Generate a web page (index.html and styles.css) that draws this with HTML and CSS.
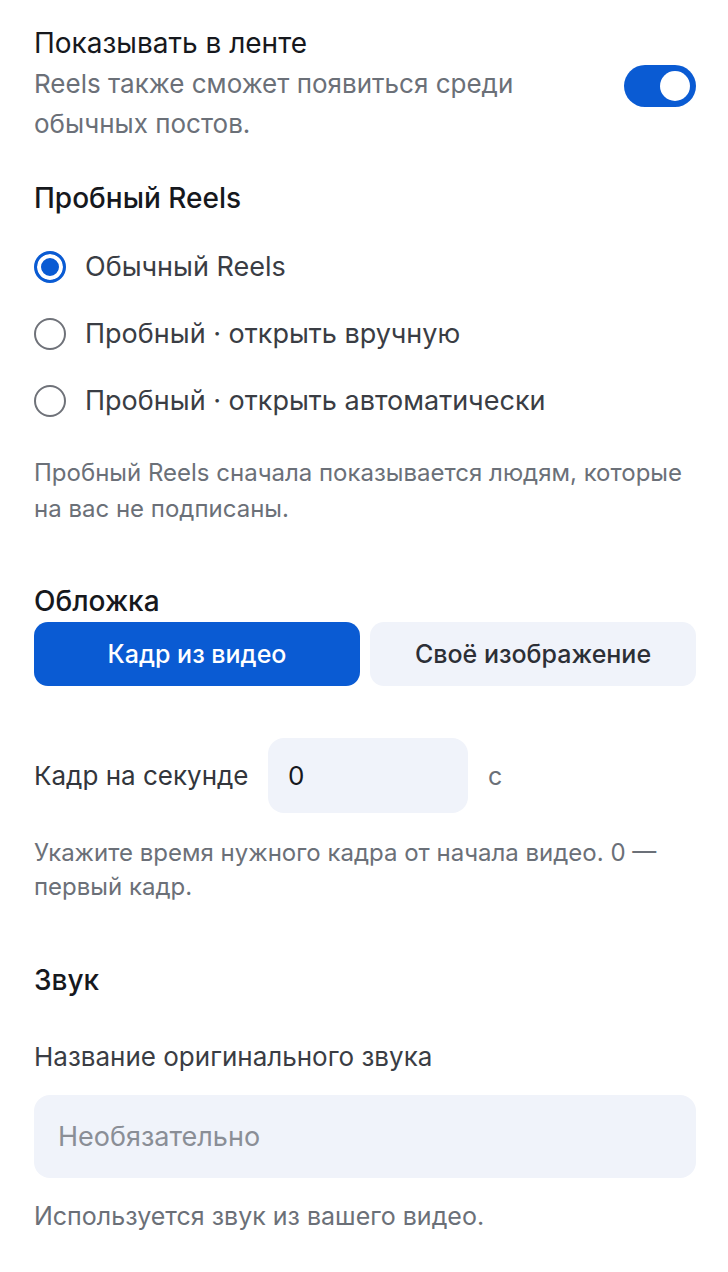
FILE: index.html
```html
<!DOCTYPE html>
<html lang="ru">
<head>
  <meta charset="UTF-8" />
  <meta name="viewport" content="width=device-width, initial-scale=1" />
  <title>Настройки Reels</title>
  <link rel="stylesheet" href="styles.css">
</head>
<body>

  <div class="settings">
    <div class="feed-row">
      <div class="feed-text">
        <div class="title">Показывать в ленте</div>
        <div class="desc">Reels также сможет появиться среди обычных постов.</div>
      </div>
      <div class="toggle on"><span class="knob"></span></div>
    </div>

    <div class="heading trial-heading">Пробный Reels</div>
    <div class="radios">
      <label class="radio checked"><span class="dot"></span>Обычный Reels</label>
      <label class="radio"><span class="dot"></span>Пробный · открыть вручную</label>
      <label class="radio"><span class="dot"></span>Пробный · открыть автоматически</label>
    </div>
    <p class="hint trial-hint">Пробный Reels сначала показывается людям, которые на вас не подписаны.</p>

    <div class="heading cover-heading">Обложка</div>
    <div class="segments">
      <button class="segment active">Кадр из видео</button>
      <button class="segment">Своё изображение</button>
    </div>

    <div class="frame-row">
      <span class="frame-label">Кадр на секунде</span>
      <div class="frame-input">0</div>
      <span class="unit">с</span>
    </div>
    <p class="hint frame-hint">Укажите время нужного кадра от начала видео. 0 — первый кадр.</p>

    <div class="heading sound-heading">Звук</div>
    <div class="field-label">Название оригинального звука</div>
    <div class="text-input">Необязательно</div>
    <p class="hint sound-hint">Используется звук из вашего видео.</p>
  </div>

</body>
</html>
```

FILE: styles.css
```css
body {
  margin: 0;
  background: #ffffff;
  font-family: Inter, "Noto Sans", Arial, sans-serif;
  color: #16181d;
}
.settings {
  padding: 26px 32px 40px 34px;
}
.feed-row {
  display: flex;
  align-items: center;
  justify-content: space-between;
}
.feed-text {
  width: 520px;
}
.title {
  font-size: 28px;
  line-height: 34px;
}
.desc {
  font-size: 26px;
  line-height: 40px;
  color: #6b7078;
  margin-top: 4px;
}
.toggle {
  width: 72px;
  height: 42px;
  border-radius: 21px;
  background: #0a5bd3;
  display: flex;
  align-items: center;
  justify-content: flex-end;
  padding: 0 6px;
  box-sizing: border-box;
  margin-top: 2px;
}
.knob {
  width: 30px;
  height: 30px;
  border-radius: 50%;
  background: #fff;
}
.heading {
  font-size: 28px;
  line-height: 34px;
  font-weight: 500;
}
.trial-heading {
  margin-top: 37px;
}
.radios {
  display: flex;
  flex-direction: column;
  gap: 35px;
  margin-top: 36px;
}
.radio {
  display: flex;
  align-items: center;
  gap: 19px;
  font-size: 27px;
  line-height: 32px;
  color: #3a3d44;
}
.dot {
  width: 32px;
  height: 32px;
  border-radius: 50%;
  border: 2px solid #6f7279;
  box-sizing: border-box;
  flex-shrink: 0;
}
.radio.checked .dot {
  border-color: #0a5bd3;
  background: #0a5bd3;
  box-shadow: inset 0 0 0 4px #fff;
  border-width: 3px;
}
.hint {
  margin: 0;
  font-size: 24px;
  line-height: 36px;
  color: #6b7078;
}
.trial-hint {
  margin-top: 38px;
}
.cover-heading {
  margin-top: 57px;
}
.segments {
  display: grid;
  grid-template-columns: 1fr 1fr;
  gap: 10px;
  margin-top: 4px;
}
.segment {
  height: 64px;
  border: none;
  border-radius: 14px;
  font-family: inherit;
  font-size: 25px;
  font-weight: 500;
  background: #f0f3fa;
  color: #2c2f36;
  cursor: pointer;
}
.segment.active {
  background: #0a5bd3;
  color: #fff;
}
.frame-row {
  display: flex;
  align-items: center;
  margin-top: 52px;
}
.frame-label {
  font-size: 26px;
  color: #33363c;
  width: 234px;
}
.frame-input {
  width: 200px;
  height: 75px;
  box-sizing: border-box;
  border-radius: 16px;
  background: #f0f3fa;
  padding: 0 20px;
  display: flex;
  align-items: center;
  font-size: 26px;
  color: #16181d;
}
.unit {
  margin-left: 20px;
  font-size: 25px;
  color: #6b7078;
}
.frame-hint {
  margin-top: 23px;
  line-height: 34px;
}
.sound-heading {
  margin-top: 59px;
}
.field-label {
  margin-top: 44px;
  font-size: 26px;
  line-height: 32px;
  color: #3a3d44;
}
.text-input {
  margin-top: 22px;
  height: 83px;
  border-radius: 16px;
  background: #f0f3fa;
  padding: 0 24px;
  display: flex;
  align-items: center;
  font-size: 27px;
  color: #8a8e96;
}
.sound-hint {
  margin-top: 20px;
  font-size: 25px;
}
```
